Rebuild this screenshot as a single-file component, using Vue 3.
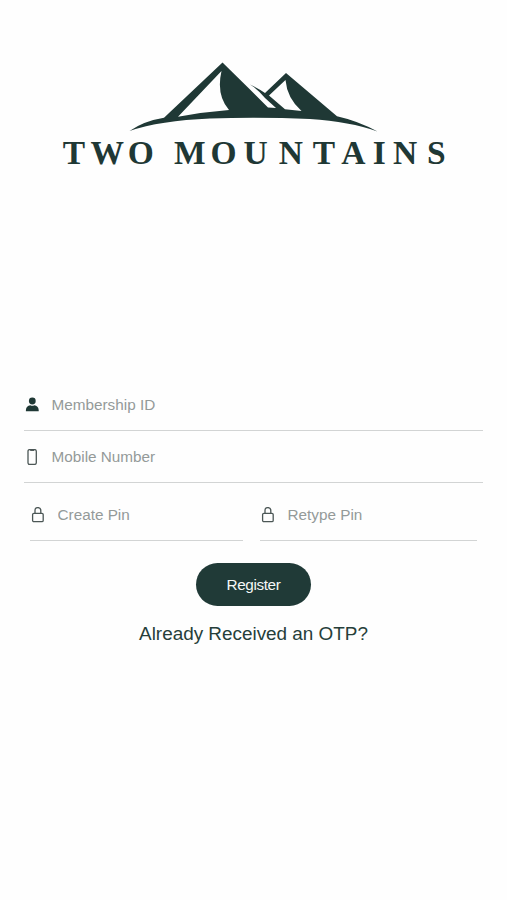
<script setup>
const accountFields = [
  { label: 'Membership ID', icon: 'user', type: 'text' },
  { label: 'Mobile Number', icon: 'phone', type: 'tel' },
]
const pinFields = ['Create Pin', 'Retype Pin']
</script>

<template>
  <main class="page">
    <svg class="logo" viewBox="0 0 507 180" role="img" aria-label="Two Mountains">
      <path class="ink" fill-rule="evenodd" d="M129.500 131Q144 121 164 117.800L222.500 62.500L250 89.500L268 107.500L276 108L265 98Q258 89.500 250 84.500Q258 88 265 93L286 73L337 116.300Q358 121 377.500 131.500Q350 121.500 310 119Q260 117 210 118.500Q160 120.500 129.500 131ZM221.500 71L178 116.800Q203 112 229 110Q216 95 221.500 71ZM285.500 80L269 95.500L285 109.300L301.500 111Q287 98 285.500 80Z" />
      <text class="ink word" y="164.300" x="62.800 90.500 127.800">TWO</text>
      <text class="ink word" y="164.300" x="174 210.500 243.500 278.700 312.700 341.300 372.700 393 427">MOUNTAINS</text>
    </svg>

    <form class="form" @submit.prevent>
      <label v-for="field in accountFields" :key="field.label" class="field">
        <svg v-if="field.icon === 'user'" class="icon" viewBox="0 0 16 16">
          <circle class="ink" cx="8.300" cy="4" r="3.400" />
          <path class="ink" d="M1.900 14.200V13Q2.300 8.800 6.300 8.300Q8.300 9.300 10.300 8.300Q14.300 8.800 14.700 13V14.200Z" />
        </svg>
        <svg v-else class="icon" viewBox="0 0 16 16">
          <rect class="line" x="4" y=".6" width="8.300" height="14.800" rx="1.600" />
          <path class="line" d="M6.200 1.300H10.200" />
        </svg>
        <input :type="field.type" :placeholder="field.label" />
      </label>

      <div class="pins">
        <label v-for="pin in pinFields" :key="pin" class="field">
          <svg class="icon" viewBox="0 0 16 16">
            <rect class="line" x="2.600" y="6.300" width="10.600" height="8.400" rx="1.300" />
            <path class="line" d="M5 6.300V3.500Q5 .6 7.900 .6Q10.800 .6 10.800 3.500V6.300" />
          </svg>
          <input type="password" :placeholder="pin" />
        </label>
      </div>

      <button class="register" type="submit">Register</button>
      <a class="otp">Already Received an OTP?</a>
    </form>
  </main>
</template>

<style>
body {
  background: #fefefe;
}
</style>

<style scoped>
.page {
  box-sizing: border-box;
  width: 507px;
  height: 900px;
  font-family: "Liberation Sans", Arial, sans-serif;
}
.logo {
  display: block;
  width: 507px;
  height: 180px;
}
.ink {
  fill: #1f3835;
}
.word {
  font-family: "Liberation Serif", "Times New Roman", serif;
  font-size: 33.500px;
  font-weight: 700;
}
.form {
  display: flex;
  flex-direction: column;
  align-items: center;
  padding: 199px 24px 0;
}
.field {
  box-sizing: border-box;
  display: flex;
  align-items: center;
  width: 459px;
  height: 52px;
  border-bottom: 1px solid #d2d4d4;
}
.icon {
  flex: none;
  width: 16px;
  height: 16px;
}
.line {
  fill: none;
  stroke: #4c5756;
  stroke-width: 1.3px;
}
input {
  min-width: 0;
  flex: 1;
  margin: 0 0 0 11.500px;
  padding: 0;
  border: 0;
  outline: 0;
  background: transparent;
  font: 15.300px "Liberation Sans", Arial, sans-serif;
}
input::placeholder {
  color: #949a99;
  opacity: 1;
}
.pins {
  display: grid;
  grid-template-columns: 213px 217px;
  gap: 17px;
  margin-top: 6px;
}
.pins .field {
  width: auto;
}
.register {
  width: 115px;
  height: 43px;
  margin: 22px 0 0;
  padding: 0;
  border: 0;
  border-radius: 22px;
  background: #203a37;
  color: #f4f7f6;
  font: 15.300px "Liberation Sans", Arial, sans-serif;
  letter-spacing: -0.4px;
}
.otp {
  margin-top: 17px;
  color: #263e3a;
  font-size: 18.900px;
  line-height: 22px;
}
</style>
